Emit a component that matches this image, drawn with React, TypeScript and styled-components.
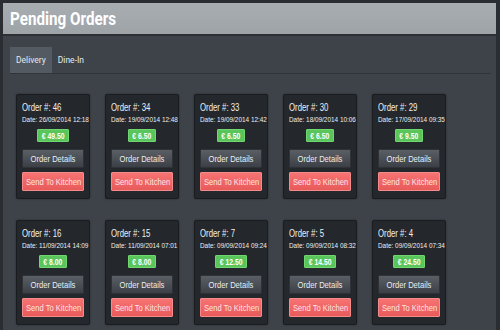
import React from 'react';
import styled, { createGlobalStyle } from 'styled-components';

const GlobalStyle = createGlobalStyle`
    html, body {
        margin: 0;
        padding: 0;
        background: #2a2e33;
    }
    * {
        box-sizing: border-box;
    }
`;

type Order = {
    id: number;
    date: string;
    total: string;
};

const orders: Order[] = [
    { id: 46, date: '26/09/2014 12:18', total: '49.50' },
    { id: 34, date: '19/09/2014 12:48', total: '6.50' },
    { id: 33, date: '19/09/2014 12:42', total: '6.50' },
    { id: 30, date: '18/09/2014 10:06', total: '6.50' },
    { id: 29, date: '17/09/2014 09:35', total: '9.50' },
    { id: 16, date: '11/09/2014 14:09', total: '8.00' },
    { id: 15, date: '11/09/2014 07:01', total: '8.00' },
    { id: 7, date: '09/09/2014 09:24', total: '12.50' },
    { id: 5, date: '09/09/2014 08:32', total: '14.50' },
    { id: 4, date: '09/09/2014 07:34', total: '24.50' },
];

const OrderCard = ({ order }: { order: Order }) => (
    <Card>
        <OrderNumber>Order #: {order.id}</OrderNumber>
        <OrderDate>Date: {order.date}</OrderDate>
        <Price>
            <Label>€ {order.total}</Label>
        </Price>
        <Button $variant="details">
            <Label>Order Details</Label>
        </Button>
        <Button $variant="kitchen">
            <Label>Send To Kitchen</Label>
        </Button>
    </Card>
);

export default function App() {
    return (
        <>
            <GlobalStyle />
            <Frame>
                <Header>
                    <Title>Pending Orders</Title>
                </Header>
                <Content>
                    <Tabs>
                        <Tab $active>Delivery</Tab>
                        <Tab>Dine-In</Tab>
                    </Tabs>
                    <Grid>
                        {orders.map((o) => (
                            <OrderCard key={o.id} order={o} />
                        ))}
                    </Grid>
                </Content>
            </Frame>
        </>
    );
}

// the screenshot text is a condensed Arial; squeeze Liberation Sans to match
const sans = `'Liberation Sans', Arial, sans-serif`;

const Frame = styled.div`
    width: 500px;
    height: 330px;
    padding: 3px 4px 0 3px;
    background: #2a2e33;
    display: flex;
    flex-direction: column;
    overflow: hidden;
`;

const Header = styled.header`
    height: 33px;
    flex-shrink: 0;
    display: flex;
    align-items: center;
    padding-left: 7px;
    background: linear-gradient(#a8adb2, #9ea3a8);
    border-bottom: 2px solid #2c3035;
`;

const Title = styled.h1`
    margin: 0;
    font-family: 'Roboto', ${sans};
    font-weight: bold;
    font-size: 19px;
    color: #ffffff;
    transform: scaleX(0.8);
    transform-origin: left center;
    white-space: nowrap;
`;

const Content = styled.main`
    flex: 1;
    background: #3d4349;
    padding: 11px 5px 0 7px;
`;

const Tabs = styled.nav`
    display: flex;
    height: 27px;
    border-bottom: 1px solid #30353a;
`;

const Tab = styled.div<{ $active?: boolean }>`
    display: flex;
    align-items: center;
    padding: 0 6px;
    min-width: 37px;
    font-family: 'Roboto', sans-serif;
    font-size: 8.5px;
    color: #e6e8ea;
    background: ${({ $active }) => ($active ? '#545a62' : 'transparent')};
`;

const Grid = styled.section`
    display: grid;
    grid-template-columns: repeat(5, 74px);
    column-gap: 15px;
    row-gap: 21px;
    padding-left: 6px;
    margin-top: 20px;
`;

const Card = styled.article`
    width: 74px;
    height: 105px;
    padding: 7px 5px 0 5px;
    background: #24272b;
    border: 1px solid #1a1c1f;
    border-radius: 2px;
    box-shadow: 0 0 2px rgba(0, 0, 0, 0.4);
    display: flex;
    flex-direction: column;
    align-items: stretch;
`;

const OrderNumber = styled.div`
    font-family: ${sans};
    font-size: 10px;
    line-height: 12px;
    color: #eef0f2;
    white-space: nowrap;
    transform: scaleX(0.78);
    transform-origin: left center;
`;

const OrderDate = styled.div`
    font-family: ${sans};
    font-size: 8px;
    line-height: 12px;
    color: #eef0f2;
    white-space: nowrap;
    transform: scaleX(0.8);
    transform-origin: left center;
`;

const Label = styled.span`
    display: inline-block;
    white-space: nowrap;
    transform: scaleX(0.8);
    transform-origin: center;
`;

const Price = styled.div`
    align-self: center;
    margin-top: 3px;
    height: 13px;
    padding: 0 1px;
    display: flex;
    align-items: center;
    justify-content: center;
    font-family: ${sans};
    font-weight: bold;
    font-size: 8.5px;
    color: #ffffff;
    background: #5ac55a;
    border: 1px solid #70d670;
    border-radius: 1px;
`;

const Button = styled.button<{ $variant: 'details' | 'kitchen' }>`
    height: 19px;
    margin-top: ${({ $variant }) => ($variant === 'details' ? '7px' : '4px')};
    padding: 0;
    font-family: ${sans};
    font-size: 9.5px;
    color: ${({ $variant }) => ($variant === 'details' ? '#eceef0' : '#ffe4e4')};
    background: ${({ $variant }) =>
        $variant === 'details'
            ? 'linear-gradient(#5a5f66, #3c4046)'
            : 'linear-gradient(#f77373, #e85a5a)'};
    border: 1px solid
        ${({ $variant }) => ($variant === 'details' ? '#2f3237' : '#f58a8a')};
    border-radius: 1px;
    cursor: pointer;
    display: flex;
    align-items: center;
    justify-content: center;
`;
